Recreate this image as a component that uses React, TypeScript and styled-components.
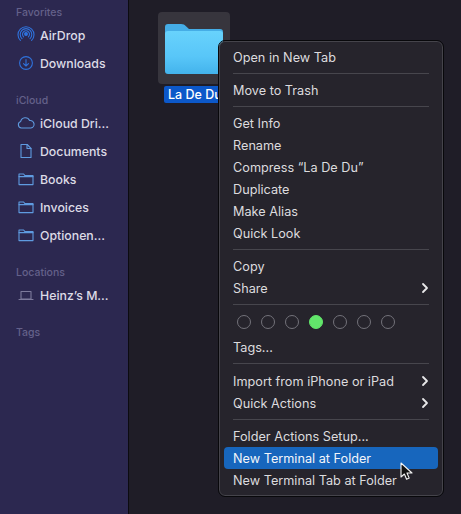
import React from "react";
import styled, { createGlobalStyle } from "styled-components";

const GlobalStyle = createGlobalStyle`
  html, body {
    margin: 0;
    padding: 0;
    background: #1f1d27;
  }
  body {
    font-family: Inter, "Liberation Sans", sans-serif;
    -webkit-font-smoothing: antialiased;
  }
`;

const Window = styled.div`
  display: flex;
  position: relative;
  width: 461px;
  height: 514px;
  overflow: hidden;
  background: #1f1d27;
`;

const Sidebar = styled.aside`
  flex: none;
  width: 129px;
  padding-top: 5px;
  box-sizing: border-box;
  background: #2c2850;
  border-right: 1px solid #0c0b10;
`;

const SectionLabel = styled.div<{ $gap?: number }>`
  height: 16px;
  margin-top: ${(p) => p.$gap ?? 0}px;
  padding-left: 16px;
  font-size: 10.5px;
  font-weight: 500;
  line-height: 16px;
  color: #64618a;
`;

const SideRow = styled.div`
  display: flex;
  align-items: center;
  height: 28px;
  padding-left: 17px;
`;

const SideIcon = styled.svg<{ $color?: string }>`
  flex: none;
  width: 18px;
  height: 18px;
  margin-right: 5px;
  fill: none;
  stroke: ${(p) => p.$color ?? "#5f9be0"};
  stroke-width: 1.1;
  stroke-linecap: round;
  stroke-linejoin: round;
`;

const SideText = styled.span`
  font-size: 12.3px;
  font-weight: 500;
  color: #dddbe6;
  white-space: nowrap;
`;

const Content = styled.main`
  flex: 1;
  padding: 12px 0 0 29px;
`;

const FileItem = styled.div`
  display: flex;
  flex-direction: column;
  align-items: center;
  width: 72px;
`;

const FileTile = styled.div`
  display: flex;
  align-items: center;
  justify-content: center;
  width: 72px;
  height: 72px;
  border-radius: 4px;
  background: #37353d;
`;

const FileName = styled.div`
  margin-top: 2px;
  width: 60px;
  height: 17px;
  padding-left: 4px;
  box-sizing: border-box;
  background: #0c58c9;
  border-radius: 2px;
  font-size: 12.5px;
  font-weight: 500;
  line-height: 17px;
  color: #fff;
  white-space: nowrap;
  overflow: hidden;
`;

const Menu = styled.div`
  position: absolute;
  left: 219px;
  top: 41px;
  width: 224px;
  height: 455px;
  box-sizing: border-box;
  padding: 4px;
  border-radius: 6px;
  background: #26242c;
  border: 1px solid #45444b;
  outline: 1px solid #08080b;
`;

const MenuRow = styled.div<{ $active?: boolean }>`
  display: flex;
  align-items: center;
  justify-content: space-between;
  height: 22px;
  padding: 0 9px;
  border-radius: 4px;
  background: ${(p) => (p.$active ? "#1766bd" : "transparent")};
  color: ${(p) => (p.$active ? "#f2f5fa" : "#dcdbde")};
  font-size: 12.7px;
  font-weight: 400;
  white-space: nowrap;
`;

const Separator = styled.div<{ $after?: number }>`
  height: 1px;
  margin: 5px 9px ${(p) => p.$after ?? 5}px;
  background: #47464d;
`;

const Chevron = styled.svg`
  width: 8px;
  height: 12px;
  fill: none;
  stroke: #e8e8ea;
  stroke-width: 1.8;
  stroke-linecap: round;
  stroke-linejoin: round;
`;

const TagRow = styled.div`
  display: flex;
  align-items: center;
  gap: 10px;
  height: 24px;
  padding: 0 0 2px 13px;
`;

const TagDot = styled.span<{ $on?: boolean }>`
  width: 14px;
  height: 14px;
  border-radius: 50%;
  box-sizing: border-box;
  background: ${(p) => (p.$on ? "#62e66b" : "transparent")};
  border: 1px solid ${(p) => (p.$on ? "#62e66b" : "#73727a")};
`;

const Cursor = styled.svg`
  position: absolute;
  left: 400px;
  top: 462px;
  width: 14px;
  height: 20px;
`;

const FolderGlyph = () => (
  <SideIcon viewBox="0 0 18 18">
    <path d="M2 4h4.6l1.3 1.6H16v9H2z" />
    <path d="M2 6.6h14" />
  </SideIcon>
);

const favorites = [
  {
    label: "AirDrop",
    icon: (
      <SideIcon viewBox="0 0 18 18" $color="#2f72dc">
        <circle cx="9" cy="8" r="1.4" fill="#2f72dc" />
        <path d="M6.6 10.8a3.5 3.5 0 1 1 4.8 0" />
        <path d="M5 12.6a5.8 5.8 0 1 1 8 0" />
        <path d="M3.4 14.4a8 8 0 1 1 11.2 0" />
      </SideIcon>
    ),
  },
  {
    label: "Downloads",
    icon: (
      <SideIcon viewBox="0 0 18 18" $color="#2f72dc">
        <circle cx="9" cy="9" r="6.4" />
        <path d="M9 5.5v6.5M6.5 9.6 9 12l2.5-2.4" />
      </SideIcon>
    ),
  },
];

const icloud = [
  {
    label: "iCloud Dri...",
    icon: (
      <SideIcon viewBox="0 0 18 18">
        <path d="M4.4 14a3.4 3.4 0 0 1-.7-6.6 4.7 4.7 0 0 1 8.9-.9 3.8 3.8 0 0 1 1.3 7.5z" />
      </SideIcon>
    ),
  },
  {
    label: "Documents",
    icon: (
      <SideIcon viewBox="0 0 18 18">
        <path d="M4 2.5h6.2L14 6.3v9.2H4z" />
        <path d="M10 2.5v4h4" />
      </SideIcon>
    ),
  },
  { label: "Books", icon: <FolderGlyph /> },
  { label: "Invoices", icon: <FolderGlyph /> },
  { label: "Optionen...", icon: <FolderGlyph /> },
];

const tagDots = [false, false, false, true, false, false, false];

const Arrow = () => (
  <Chevron viewBox="0 0 8 12">
    <path d="M2 2l4 4-4 4" />
  </Chevron>
);

export default function App() {
  return (
    <>
      <GlobalStyle />
      <Window>
        <Sidebar>
          <SectionLabel>Favorites</SectionLabel>
          {favorites.map((f) => (
            <SideRow key={f.label}>
              {f.icon}
              <SideText>{f.label}</SideText>
            </SideRow>
          ))}
          <SectionLabel $gap={16}>iCloud</SectionLabel>
          {icloud.map((f) => (
            <SideRow key={f.label}>
              {f.icon}
              <SideText>{f.label}</SideText>
            </SideRow>
          ))}
          <SectionLabel $gap={16}>Locations</SectionLabel>
          <SideRow>
            <SideIcon viewBox="0 0 18 18" $color="#7d7a9c">
              <path d="M4 5.5h10v7.5H4z" />
              <path d="M2 13.5h14" />
            </SideIcon>
            <SideText>Heinz’s M...</SideText>
          </SideRow>
          <SectionLabel $gap={16}>Tags</SectionLabel>
        </Sidebar>
        <Content>
          <FileItem>
            <FileTile>
              <svg width="58" height="51" viewBox="0 0 58 51">
                <defs>
                  <linearGradient id="folderFront" x1="0" y1="0" x2="0" y2="1">
                    <stop offset="0" stopColor="#68d2fc" />
                    <stop offset="0.6" stopColor="#58c6f8" />
                    <stop offset="1" stopColor="#43b3ec" />
                  </linearGradient>
                </defs>
                <path
                  d="M0 4a3 3 0 0 1 3-3h13c2.5 0 3.5.8 5 2.2L24 6h31a3 3 0 0 1 3 3v8H0z"
                  fill="#45ade6"
                />
                <path
                  d="M0 11a3 3 0 0 1 3-3h52a3 3 0 0 1 3 3v37a3 3 0 0 1-3 3H3a3 3 0 0 1-3-3z"
                  fill="url(#folderFront)"
                />
              </svg>
            </FileTile>
            <FileName>La De Du</FileName>
          </FileItem>
        </Content>
        <Menu>
          <MenuRow>Open in New Tab</MenuRow>
          <Separator />
          <MenuRow>Move to Trash</MenuRow>
          <Separator />
          <MenuRow>Get Info</MenuRow>
          <MenuRow>Rename</MenuRow>
          <MenuRow>Compress “La De Du”</MenuRow>
          <MenuRow>Duplicate</MenuRow>
          <MenuRow>Make Alias</MenuRow>
          <MenuRow>Quick Look</MenuRow>
          <Separator />
          <MenuRow>Copy</MenuRow>
          <MenuRow>
            Share
            <Arrow />
          </MenuRow>
          <Separator />
          <TagRow>
            {tagDots.map((on, i) => (
              <TagDot key={i} $on={on} />
            ))}
          </TagRow>
          <MenuRow>Tags...</MenuRow>
          <Separator $after={6} />
          <MenuRow>
            Import from iPhone or iPad
            <Arrow />
          </MenuRow>
          <MenuRow>
            Quick Actions
            <Arrow />
          </MenuRow>
          <Separator />
          <MenuRow>Folder Actions Setup...</MenuRow>
          <MenuRow $active>New Terminal at Folder</MenuRow>
          <MenuRow>New Terminal Tab at Folder</MenuRow>
        </Menu>
        <Cursor viewBox="0 0 14 20">
          <path
            d="M1 1v14l3.4-3 2.2 5.2 2.6-1.1L7 11h5z"
            fill="#111"
            stroke="#f4f4f4"
            strokeWidth="1.1"
            strokeLinejoin="round"
          />
        </Cursor>
      </Window>
    </>
  );
}
